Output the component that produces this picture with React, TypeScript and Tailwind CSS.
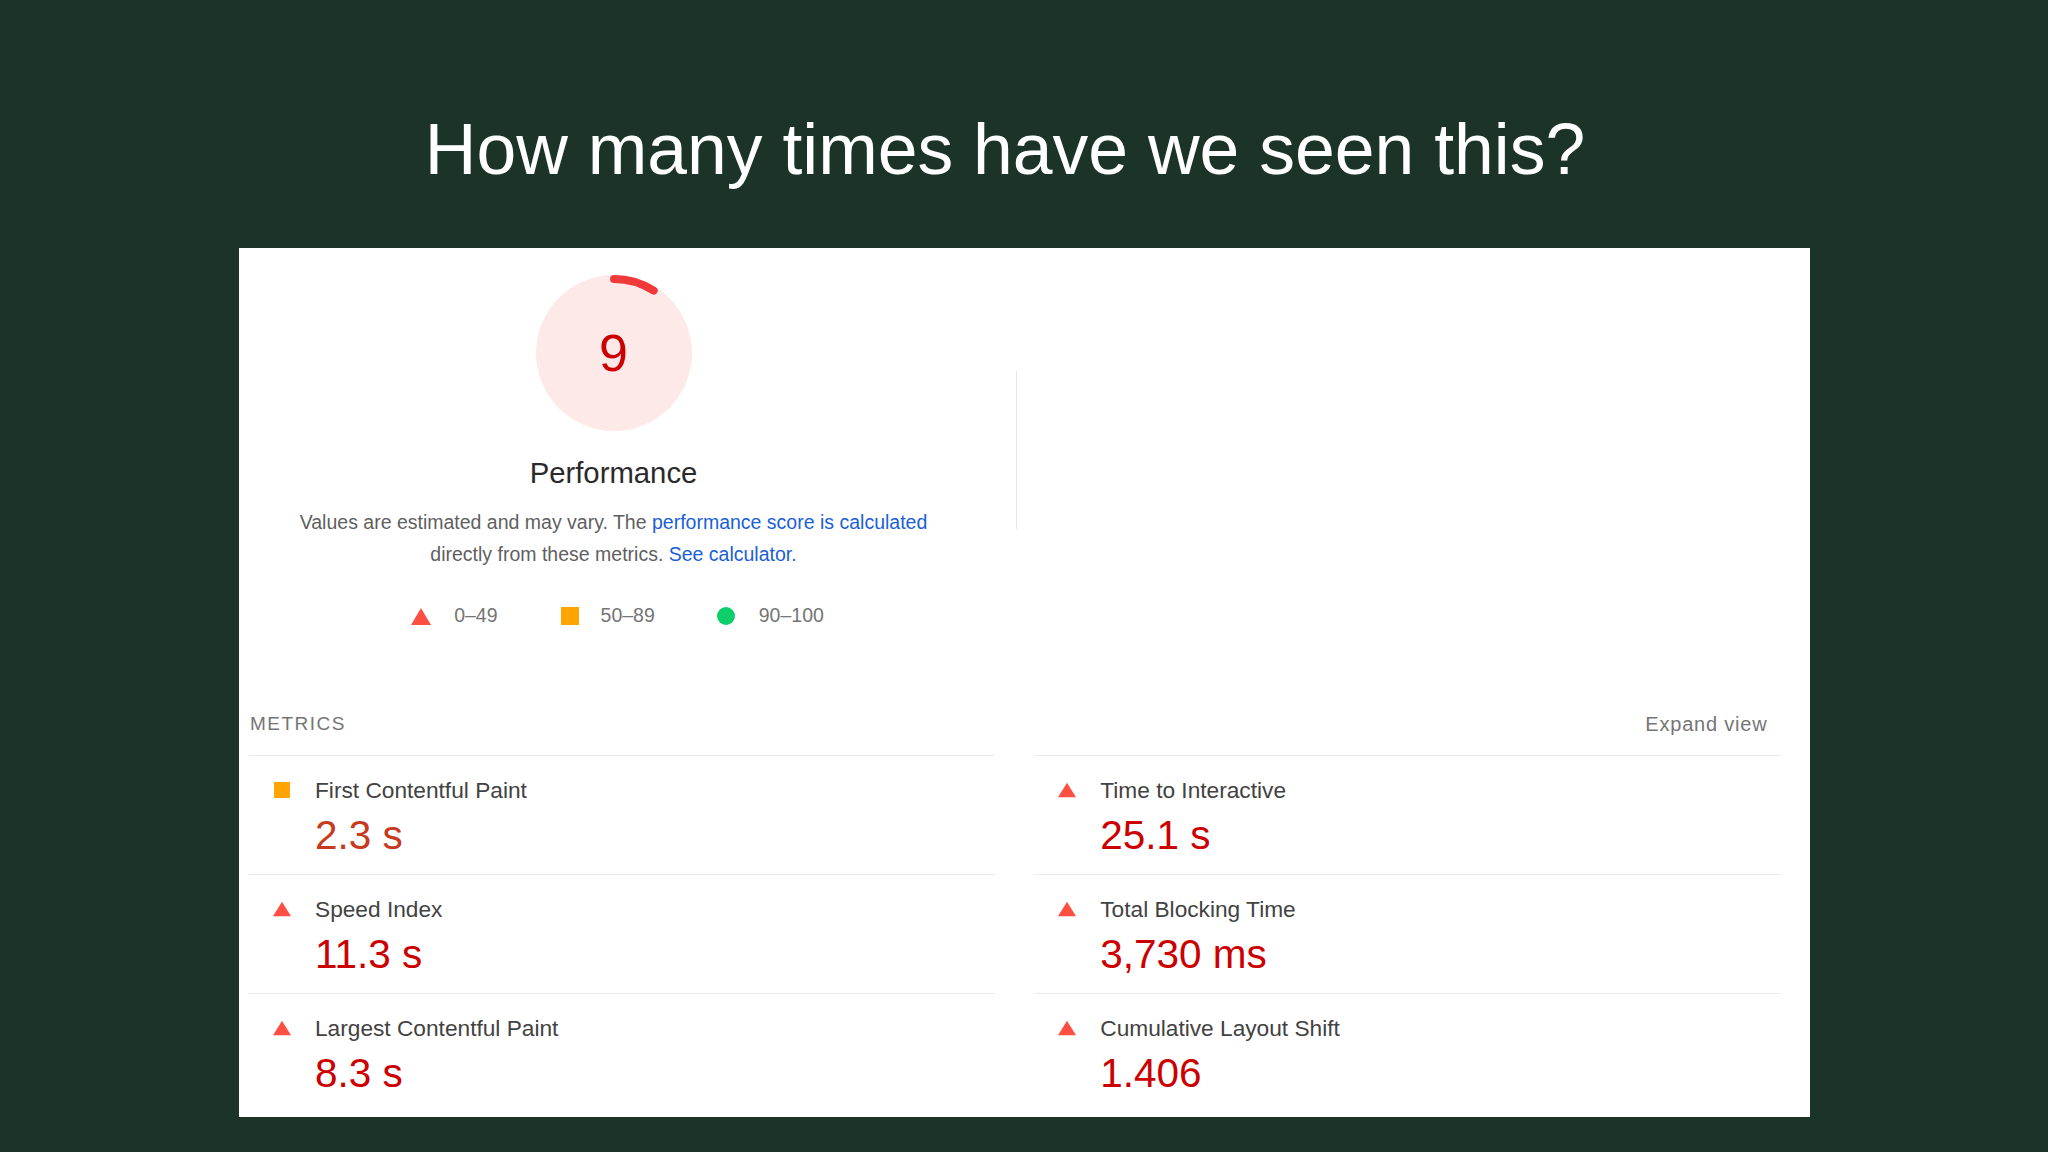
import React from "react";

function Triangle({ w = 20, h = 17 }: { w?: number; h?: number }) {
  return (
    <svg width={w} height={h} viewBox={`0 0 ${w} ${h}`}>
      <polygon points={`${w / 2},0 ${w},${h} 0,${h}`} fill="#ff4e42" />
    </svg>
  );
}

function Square({ s = 17 }: { s?: number }) {
  return (
    <svg width={s} height={s} viewBox={`0 0 ${s} ${s}`}>
      <rect x="0" y="0" width={s} height={s} fill="#ffa400" />
    </svg>
  );
}

function Dot({ s = 18 }: { s?: number }) {
  return (
    <svg width={s} height={s} viewBox={`0 0 ${s} ${s}`}>
      <circle cx={s / 2} cy={s / 2} r={s / 2} fill="#0cce6b" />
    </svg>
  );
}

function Gauge() {
  const r = 74;
  const c = 2 * Math.PI * r;
  return (
    <div className="relative w-[156px] h-[156px]">
      <svg width="156" height="156" viewBox="0 0 156 156">
        <circle cx="78" cy="78" r="78" fill="#fde9e8" />
        <circle
          cx="78"
          cy="78"
          r={r}
          fill="none"
          stroke="#f03a3a"
          strokeWidth="8"
          strokeLinecap="round"
          strokeDasharray={`${0.09 * c} ${c}`}
          transform="rotate(-90 78 78)"
        />
      </svg>
      <div className="absolute inset-0 flex items-center justify-center text-[52px] leading-none text-[#cc0000]">
        9
      </div>
    </div>
  );
}

type Metric = { label: string; value: string; kind: "fail" | "average" };

const metrics: Metric[] = [
  { label: "First Contentful Paint", value: "2.3 s", kind: "average" },
  { label: "Time to Interactive", value: "25.1 s", kind: "fail" },
  { label: "Speed Index", value: "11.3 s", kind: "fail" },
  { label: "Total Blocking Time", value: "3,730 ms", kind: "fail" },
  { label: "Largest Contentful Paint", value: "8.3 s", kind: "fail" },
  { label: "Cumulative Layout Shift", value: "1.406", kind: "fail" },
];

function MetricRow({ m }: { m: Metric }) {
  return (
    <div className="border-t border-[#ebebeb] pl-[24px] pt-[22px] pb-[17px]">
      <div className="flex items-center h-[24px]">
        <div className="w-[18px] mr-[24px] flex items-center justify-center">
          {m.kind === "fail" ? <Triangle w={20} h={16} /> : <Square s={16} />}
        </div>
        <span className="text-[22.7px] leading-[24px] text-[#424242]">{m.label}</span>
      </div>
      <div
        className={
          m.kind === "fail"
            ? "mt-[11px] pl-[42px] text-[40.5px] leading-[44px] text-[#cc0000]"
            : "mt-[11px] pl-[42px] text-[40.5px] leading-[44px] text-[#c63a20]"
        }
      >
        {m.value}
      </div>
    </div>
  );
}

export default function App() {
  return (
    <div className="w-[2048px] h-[1152px] bg-[#1b3427] flex flex-col items-center font-['Liberation_Sans',Arial,sans-serif] overflow-hidden">
      <h1 className="mt-[113px] pr-[38px] text-[71.5px] leading-[72px] text-white font-normal">
        How many times have we seen this?
      </h1>
      <div className="mt-[63px] w-[1571px] h-[869px] bg-white flex flex-col pt-[27px]">
        <div className="flex">
          <div className="w-[750px] flex flex-col items-center">
            <Gauge />
            <div className="mt-[26px] text-[29.3px] leading-[32px] text-[#2a2a2a]">Performance</div>
            <div className="mt-[17px] text-center text-[19.5px] leading-[32px] text-[#5f5f5f]">
              Values are estimated and may vary. The{" "}
              <span className="text-[#1a5fd6]">performance score is calculated</span>
              <br />
              directly from these metrics. <span className="text-[#1a5fd6]">See calculator.</span>
            </div>
            <div className="mt-[34px] h-[24px] flex items-center pl-[8px] text-[19.5px] text-[#757575]">
              <Triangle w={20} h={17} />
              <span className="ml-[23px]">0–49</span>
              <span className="ml-[63px] flex items-center">
                <Square s={18} />
              </span>
              <span className="ml-[22px]">50–89</span>
              <span className="ml-[62px] flex items-center">
                <Dot s={18} />
              </span>
              <span className="ml-[24px]">90–100</span>
            </div>
          </div>
          <div className="ml-[27px] mt-[96px] w-px h-[158px] bg-[#e6e6e6]" />
        </div>

        <div className="mt-[86px] flex justify-between pl-[11.5px] pr-[42px] h-[20px] leading-[20px]">
          <span className="text-[19px] tracking-[1.5px] text-[#757575]">METRICS</span>
          <span className="text-[20px] tracking-[0.8px] font-medium text-[#757575]">Expand view</span>
        </div>

        <div className="mt-[21px] grid grid-cols-2 gap-x-[39px] pl-[10.5px] pr-[29px]">
          {metrics.map((m) => (
            <MetricRow key={m.label} m={m} />
          ))}
        </div>
      </div>
    </div>
  );
}
